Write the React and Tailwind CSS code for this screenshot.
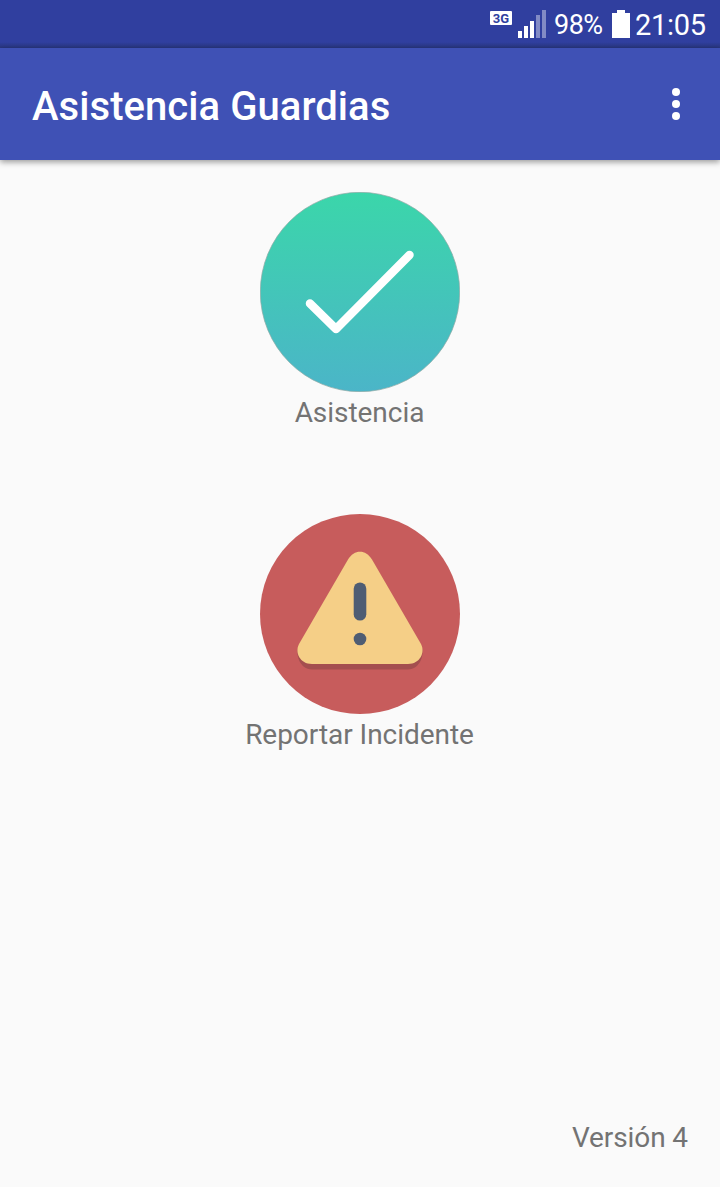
function SignalIcon() {
  return (
    <svg className="w-7 h-7" viewBox="0 0 28 28" fill="#fff">
      <rect x="0" y="21" width="4" height="7" />
      <rect x="6" y="16" width="4" height="12" />
      <rect x="12" y="11" width="4" height="17" />
      <rect x="18" y="5" width="4" height="23" opacity="0.4" />
      <rect x="24" y="0" width="4" height="28" opacity="0.4" />
    </svg>
  );
}

function BatteryIcon() {
  return (
    <svg className="w-[18px] h-7" viewBox="0 0 18 28" fill="#fff">
      <path d="M5 0h8v3h5v25H0V3h5z" />
    </svg>
  );
}

function CheckIcon() {
  return (
    <svg className="block w-[200px] h-[200px]" viewBox="0 0 200 200" fill="none">
      <defs>
        <linearGradient id="checkFill" x1="0" y1="0" x2="0" y2="1">
          <stop offset="0" stopColor="#3bd6aa" />
          <stop offset="1" stopColor="#4bb5c8" />
        </linearGradient>
      </defs>
      <circle cx="100" cy="100" r="99.7" fill="url(#checkFill)" stroke="#8fa9a5" strokeWidth="0.7" />
      <path d="M50 111.5L76 137L149.5 63" stroke="#fff" strokeWidth="8.5" strokeLinecap="round" strokeLinejoin="round" />
    </svg>
  );
}

function WarningIcon() {
  return (
    <svg className="block w-[200px] h-[200px]" viewBox="0 0 200 200">
      <circle cx="100" cy="100" r="100" fill="#c75c5c" />
      <path
        d="M88 46C93 35.5 107 35.5 112 46L161 131C165.5 140 160 155.5 148 155.5H52C40 155.5 34.5 140 39 131Z"
        fill="#a44e4f"
      />
      <path
        d="M88 45.5C94 35 106 35 112 45.5L161 130C165.5 138.5 160 150 148 150H52C40 150 34.5 138.5 39 130Z"
        fill="#f5cf87"
      />
      <rect x="93.7" y="68.5" width="12.6" height="38" rx="6.3" fill="#4f5d73" />
      <circle cx="100" cy="125" r="6.3" fill="#4f5d73" />
    </svg>
  );
}

const menuItems = [
  { label: 'Asistencia', icon: CheckIcon },
  { label: 'Reportar Incidente', icon: WarningIcon }
];

function StatusBar() {
  return (
    <div className="flex h-12 shrink-0 items-start justify-end bg-[linear-gradient(to_bottom,#303f9f_42px,#29367f_48px)] pr-3.5 text-white">
      <span className="mt-[11px] flex h-3.5 w-[22px] items-center justify-center rounded-[1px] bg-white text-[13px] leading-none font-bold text-[#303f9f]">
        3G
      </span>
      <div className="mt-2.5 ml-1.5">
        <SignalIcon />
      </div>
      <span className="mt-[9px] ml-2 w-[50px] text-[27px] leading-8 tracking-[-0.5px] whitespace-nowrap">98%</span>
      <div className="mt-2.5 ml-2">
        <BatteryIcon />
      </div>
      <span className="mt-[9px] ml-[5px] w-[71px] text-[29px] leading-8 tracking-[-0.3px] whitespace-nowrap">21:05</span>
    </div>
  );
}

function Toolbar() {
  return (
    <header className="z-10 flex h-28 shrink-0 items-center justify-between bg-[#3f51b5] pr-10 pl-8 text-white shadow-[0_2px_6px_rgba(0,0,0,0.4)]">
      <h1 className="mt-1.5 text-[40px] leading-none font-medium tracking-[0.06px]">Asistencia Guardias</h1>
      <button className="flex flex-col items-center gap-1" aria-label="Menú">
        <span className="h-2 w-2 rounded-full bg-white" />
        <span className="h-2 w-2 rounded-full bg-white" />
        <span className="h-2 w-2 rounded-full bg-white" />
      </button>
    </header>
  );
}

export default function App() {
  return (
    <div className="flex h-[1187px] w-[720px] flex-col overflow-hidden bg-[#fafafa] font-['Roboto',sans-serif]">
      <StatusBar />
      <Toolbar />

      <main className="flex flex-1 flex-col items-center pt-8">
        {menuItems.map(({ label, icon: Icon }) => (
          <button key={label} className="flex h-[322px] flex-col items-center">
            <Icon />
            <span className="mt-0.5 mr-px text-[28px] leading-[38px] tracking-[-0.04px] text-[#737373]">{label}</span>
          </button>
        ))}
      </main>

      <footer className="flex justify-end pr-8 pb-8 text-[28px] leading-[34px] tracking-[-0.1px] text-[#737373]">
        Versión 4
      </footer>
    </div>
  );
}
